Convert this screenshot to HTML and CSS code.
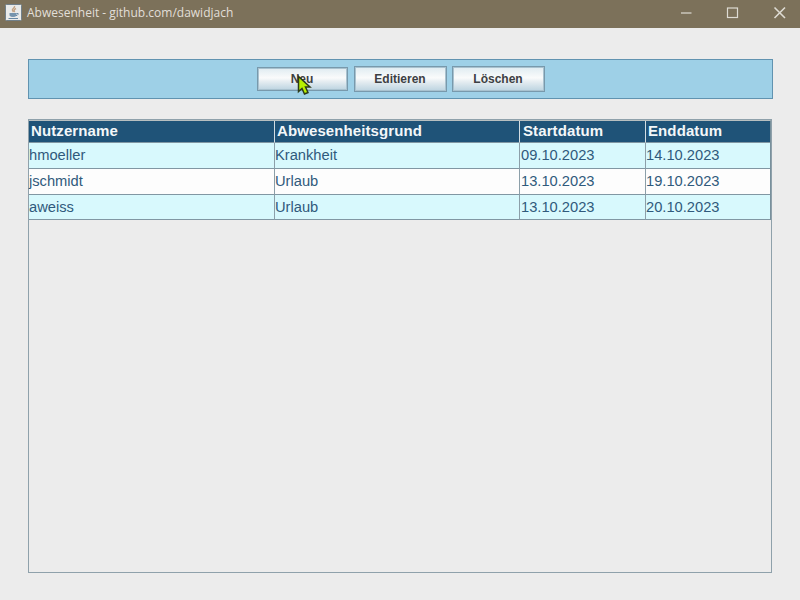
FILE: index.html
```html
<!DOCTYPE html>
<html lang="de">
<head>
<meta charset="utf-8">
<title>Abwesenheit</title>
<link rel="stylesheet" href="styles.css">
</head>
<body>
<header class="titlebar">
  <svg class="app-icon" width="17" height="17" viewBox="0 0 17 17">
    <rect x="0.5" y="0.5" width="16" height="16" rx="1" fill="#e9ebea" stroke="#71808a"/>
    <path d="M9.500 2c1 2-3 2.500-2 4.500l1 1.500M11 4.500c-2 1-2.500 2-1.200 3.500" fill="none" stroke="#c4a384" stroke-width="1.400"/>
    <path d="M4.500 9h7v2.500q-1 1.500-3.500 1.500t-3.500-1.500z" fill="#7594ad"/>
    <path d="M11.500 9.500q2.500-.5 1.500 1t-2 1M3.500 14.500h9.500" fill="none" stroke="#6788a4"/>
  </svg>
  <h1 class="title">Abwesenheit - github.com/dawidjach</h1>
  <svg class="controls" width="106" height="14" viewBox="0 0 106 14" fill="none" stroke="#dedbd3" stroke-width="1.200">
    <path d="M1 7h10.500"/>
    <rect x="47.500" y="2" width="10" height="9.500"/>
    <path d="M94.500 1.500l10.500 10.500M105 1.500L94.500 12" stroke-width="1.600"/>
  </svg>
</header>
<main class="content">
  <nav class="toolbar">
    <button class="button button-pressed">Neu</button>
    <button class="button">Editieren</button>
    <button class="button">Löschen</button>
  </nav>
  <section class="panel">
    <div class="grid">
      <div class="row head"><span>Nutzername</span><span>Abwesenheitsgrund</span><span>Startdatum</span><span>Enddatum</span></div>
      <div class="row tinted"><span>hmoeller</span><span>Krankheit</span><span>09.10.2023</span><span>14.10.2023</span></div>
      <div class="row"><span>jschmidt</span><span>Urlaub</span><span>13.10.2023</span><span>19.10.2023</span></div>
      <div class="row tinted"><span>aweiss</span><span>Urlaub</span><span>13.10.2023</span><span>20.10.2023</span></div>
    </div>
  </section>
</main>
<svg class="cursor" width="16" height="22" viewBox="0 0 16 22">
  <path d="M1.500 1.500v15l3.500-3 2.500 5.500 3.500-1.500-2.500-5.500h4.500z" fill="#b8f000" stroke="#2c3b18" stroke-width="1.500"/>
</svg>
</body>
</html>
```
FILE: styles.css
```css
* { box-sizing: border-box; }

body {
  margin: 0;
  width: 800px;
  height: 600px;
  overflow: hidden;
  background: #ececec;
  font-family: "Liberation Sans", Arial, sans-serif;
}

.titlebar {
  display: flex;
  align-items: center;
  height: 28px;
  padding: 0 14px 3px 5px;
  background: #7c715a;
}

.title {
  margin: 0 auto 0 5px;
  color: #e2dfd8;
  font: 400 12px/20px "Open Sans", "Noto Sans", sans-serif;
}

.content { padding: 31px 27px 0 28px; }

.toolbar {
  display: flex;
  justify-content: center;
  align-items: center;
  gap: 5px;
  height: 40px;
  padding-bottom: 1px;
  border: 1px solid #6193b0;
  background: #9ed0e7;
}

.button {
  width: 93px;
  height: 26px;
  margin: 0;
  padding: 0;
  border: 1px solid #7899ac;
  background: linear-gradient(#dfebf1, #fafbfb 45%, #e7eef2 60%, #bbd3e0);
  box-shadow: inset 0 0 0 1px #a9c2cf;
  color: #3d4043;
  font: 700 12px/20px "Liberation Sans", Arial, sans-serif;
}

.button-pressed {
  width: 91px;
  height: 24px;
  margin-right: 1px;
}

.panel {
  width: 744px;
  height: 454px;
  margin-top: 20px;
  border: 1px solid #8fa1ab;
}

.grid {
  border-top: 1px solid #b8bfc0;
  border-right: 1px solid #78909c;
}

.row {
  display: grid;
  grid-template-columns: 246px 245px 126px 1fr;
  grid-template-rows: 100%;
  height: 26px;
  background: #fdfdfd;
  color: #305a7c;
  font-size: 14.7px;
  line-height: 25px;
}

.row:last-child { height: 25px; }

.row span {
  border-right: 1px solid #8c9fa9;
  border-bottom: 1px solid #8197a3;
  white-space: nowrap;
}

.row span:nth-child(3) { padding-left: 1px; }

.row span:last-child { border-right: 0; }

.tinted { background: #d8f9fd; }

.head {
  height: 22px;
  background: #1f5378;
  color: #f3f7f9;
  font-size: 15px;
  font-weight: 700;
  letter-spacing: 0.1px;
  line-height: 20px;
}

.head span { padding-left: 2px; border-right-color: #d3dde2; }

.head span:nth-child(3) { padding-left: 3px; }

.cursor {
  position: absolute;
  left: 297px;
  top: 75px;
}
```
